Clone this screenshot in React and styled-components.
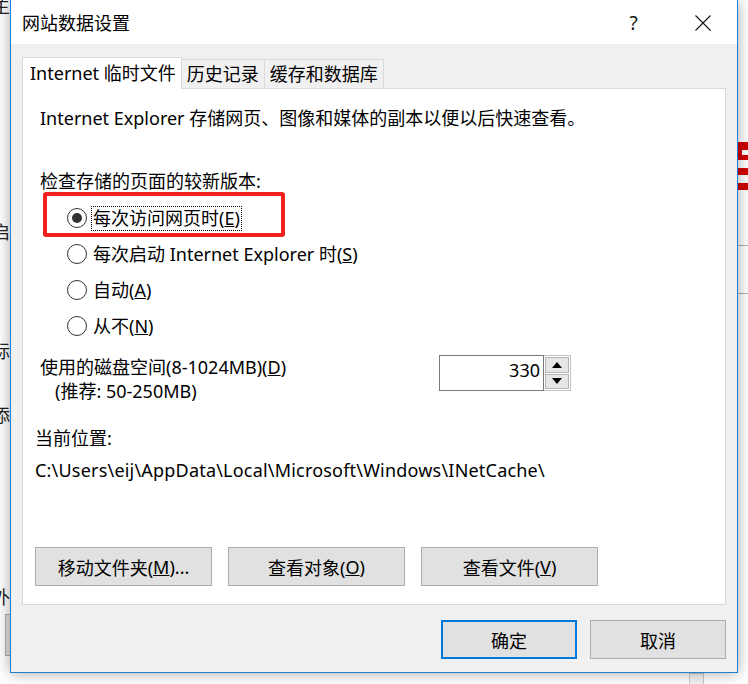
import React from "react";
import styled, { createGlobalStyle } from "styled-components";

const Global = createGlobalStyle`
  html, body { margin: 0; padding: 0; background: #fff; }
  body {
    width: 748px; height: 684px; overflow: hidden;
    font-family: "Noto Sans", "Noto Sans CJK SC", sans-serif;
    font-size: 18px; color: #000;
  }
  * { box-sizing: border-box; }
`;

const Desktop = styled.div`
  position: relative;
  width: 748px;
  height: 684px;
  overflow: hidden;
  background: #fff;
  padding-left: 10px;
`;

const BackText = styled.span`
  position: absolute;
  left: -8px;
  top: ${(p) => p.$top}px;
  font-size: 18px;
  line-height: 20px;
  color: #222;
  z-index: 0;
`;

const BackBox = styled.div`
  position: absolute;
  left: ${(p) => p.$left}px;
  top: ${(p) => p.$top}px;
  width: ${(p) => p.$w}px;
  height: ${(p) => p.$h}px;
  background: ${(p) => p.$bg || "#e1e1e1"};
  border: ${(p) => (p.$border ? `1px solid ${p.$border}` : "none")};
  z-index: 0;
`;

const Dialog = styled.div`
  position: relative;
  z-index: 1;
  width: 728px;
  height: 673px;
  border: 1px solid #1f80d6;
  border-top: none;
  background: #f0f0f0;
  box-shadow: 0 0 14px rgba(0, 0, 0, 0.35);
  display: flex;
  flex-direction: column;
`;

const TitleBar = styled.div`
  height: 44px;
  flex: none;
  background: #fff;
  display: flex;
  align-items: center;
  padding-left: 11px;
`;

const Title = styled.div`
  flex: 1;
  font-size: 18px;
  line-height: 24px;
  padding-top: 2px;
`;

const TitleButton = styled.div`
  width: 69px;
  height: 44px;
  display: flex;
  align-items: center;
  justify-content: center;
  font-size: 19px;
  color: #111;
  padding-top: 2px;
`;

const Body = styled.div`
  flex: 1;
  display: flex;
  flex-direction: column;
  padding: 13px 11px 13px 11px;
`;

const TabRow = styled.div`
  display: flex;
  align-items: flex-end;
  height: 32px;
  margin-bottom: -1px;
  position: relative;
  z-index: 2;
`;

const Tab = styled.div`
  height: ${(p) => (p.$active ? 32 : 29)}px;
  margin-bottom: ${(p) => (p.$active ? 0 : 1)}px;
  background: ${(p) => (p.$active ? "#fff" : "#f0f0f0")};
  border: 1px solid #d9d9d9;
  border-bottom: none;
  border-left: ${(p) => (p.$first ? "1px solid #d9d9d9" : "none")};
  padding: ${(p) => (p.$active ? "0 5px 0 7px" : "0 5px")};
  font-size: 18px;
  line-height: ${(p) => (p.$active ? 30 : 29)}px;
  white-space: nowrap;
`;

const Panel = styled.div`
  flex: 1;
  background: #fff;
  border: 1px solid #d9d9d9;
  display: flex;
  flex-direction: column;
  padding: 17px 17px 18px 12px;
`;

const Line = styled.div`
  font-size: 18px;
  line-height: 24px;
  white-space: nowrap;
  margin-left: ${(p) => p.$indent ?? 5}px;
  margin-top: ${(p) => p.$mt || 0}px;
  letter-spacing: ${(p) => p.$ls || 0}px;
`;

const RadioGroup = styled.div`
  position: relative;
  margin-left: 5px;
  margin-top: 7px;
  display: flex;
  flex-direction: column;
`;

const RadioRow = styled.div`
  height: 36px;
  display: flex;
  align-items: center;
  padding-left: 27px;
`;

const RadioCircle = styled.span`
  width: 20px;
  height: 20px;
  border-radius: 50%;
  border: 1px solid #333;
  display: flex;
  align-items: center;
  justify-content: center;
  flex: none;
  &::after {
    content: "";
    display: ${(p) => (p.$checked ? "block" : "none")};
    width: 10px;
    height: 10px;
    border-radius: 50%;
    background: #333;
  }
`;

const RadioLabel = styled.span`
  margin-left: 4px;
  padding: 0 1px;
  line-height: 23px;
  border: 1px dotted ${(p) => (p.$focus ? "#000" : "transparent")};
  white-space: nowrap;
`;

const Highlight = styled.div`
  position: absolute;
  left: 3px;
  top: -8px;
  width: 242px;
  height: 45px;
  border: 4px solid #f2231c;
  border-radius: 3px;
  pointer-events: none;
`;

const DiskRow = styled.div`
  display: grid;
  grid-template-columns: 399px auto;
  margin-left: 5px;
  margin-top: 11px;
  align-items: start;
`;

const DiskText = styled.div`
  padding-top: 0px;
`;

const SpinBox = styled.div`
  display: flex;
  height: 36px;
`;

const SpinField = styled.div`
  width: 105px;
  height: 36px;
  border: 1px solid #7a7a7a;
  text-align: right;
  padding-right: 3px;
  font-size: 18px;
  line-height: 28px;
`;

const SpinButtons = styled.div`
  width: 27px;
  height: 36px;
  border: 1px solid #c2c2c2;
  border-left: none;
  padding: 1px;
  display: flex;
  flex-direction: column;
  gap: 1px;
`;

const SpinBtn = styled.div`
  flex: 1;
  background: #e6e6e6;
  border: 1px solid #b4b4b4;
  display: flex;
  align-items: center;
  justify-content: center;
`;

const ButtonRow = styled.div`
  margin-top: auto;
  display: flex;
  gap: 16px;
`;

const PushButton = styled.div`
  width: ${(p) => p.$w}px;
  height: 39px;
  background: #e1e1e1;
  border: ${(p) => (p.$default ? "2px solid #0078d7" : "1px solid #adadad")};
  display: flex;
  align-items: center;
  justify-content: center;
  font-size: 18px;
  white-space: nowrap;
`;

const Footer = styled.div`
  margin-top: 15px;
  display: flex;
  justify-content: flex-end;
  gap: 13px;
`;

const Tri = ({ up }) => (
  <svg width="10" height="6" viewBox="0 0 10 6">
    <polygon points={up ? "5,0 10,6 0,6" : "0,0 10,0 5,6"} fill="#000" />
  </svg>
);

export default function App() {
  return (
    <>
      <Global />
      <Desktop>
        <BackText $top={-4}>主</BackText>
        <BackText $top={222}>启</BackText>
        <BackText $top={341}>标</BackText>
        <BackText $top={405}>添</BackText>
        <BackText $top={587}>外</BackText>
        <BackBox $left={5} $top={614} $w={20} $h={42} $bg="#e1e1e1" $border="#adadad" />
        <BackBox $left={738} $top={142} $w={12} $h={18} $bg="#d10000" />
        <BackBox $left={742} $top={150} $w={8} $h={5} $bg="#fff" />
        <BackBox $left={738} $top={168} $w={12} $h={7} $bg="#d10000" />
        <BackBox $left={738} $top={183} $w={12} $h={7} $bg="#d10000" />
        <BackBox $left={738} $top={245} $w={12} $h={1} $bg="#b0b0b0" />
        <BackBox $left={738} $top={293} $w={12} $h={1} $bg="#b0b0b0" />
        <BackBox $left={689} $top={673} $w={15} $h={12} $bg="#f2f2f2" $border="#c8c8c8" />

        <Dialog>
          <TitleBar>
            <Title>网站数据设置</Title>
            <TitleButton>?</TitleButton>
            <TitleButton>
              <svg width="16" height="16" viewBox="0 0 16 16">
                <path d="M0.5 0.5 L15.5 15.5 M15.5 0.5 L0.5 15.5" stroke="#111" strokeWidth="1.1" />
              </svg>
            </TitleButton>
          </TitleBar>
          <Body>
            <TabRow>
              <Tab $active $first>Internet 临时文件</Tab>
              <Tab>历史记录</Tab>
              <Tab>缓存和数据库</Tab>
            </TabRow>
            <Panel>
              <Line>Internet Explorer 存储网页、图像和媒体的副本以便以后快速查看。</Line>
              <Line $mt={39}>检查存储的页面的较新版本:</Line>
              <RadioGroup>
                <RadioRow>
                  <RadioCircle $checked />
                  <RadioLabel $focus>每次访问网页时(<u>E</u>)</RadioLabel>
                </RadioRow>
                <RadioRow>
                  <RadioCircle />
                  <RadioLabel>每次启动 Internet Explorer 时(<u>S</u>)</RadioLabel>
                </RadioRow>
                <RadioRow>
                  <RadioCircle />
                  <RadioLabel>自动(<u>A</u>)</RadioLabel>
                </RadioRow>
                <RadioRow>
                  <RadioCircle />
                  <RadioLabel>从不(<u>N</u>)</RadioLabel>
                </RadioRow>
                <Highlight />
              </RadioGroup>
              <DiskRow>
                <DiskText>
                  <Line $indent={0}>使用的磁盘空间(8-1024MB)(<u>D</u>)</Line>
                  <Line $indent={15}>(推荐: 50-250MB)</Line>
                </DiskText>
                <SpinBox>
                  <SpinField>330</SpinField>
                  <SpinButtons>
                    <SpinBtn><Tri up /></SpinBtn>
                    <SpinBtn><Tri /></SpinBtn>
                  </SpinButtons>
                </SpinBox>
              </DiskRow>
              <Line $indent={0} $mt={23}>当前位置:</Line>
              <Line $indent={0} $mt={8} $ls={0.2}>C:\Users\eij\AppData\Local\Microsoft\Windows\INetCache\</Line>
              <ButtonRow>
                <PushButton $w={177}>移动文件夹(<u>M</u>)...</PushButton>
                <PushButton $w={177}>查看对象(<u>O</u>)</PushButton>
                <PushButton $w={177}>查看文件(<u>V</u>)</PushButton>
              </ButtonRow>
            </Panel>
            <Footer>
              <PushButton $w={136} $default>确定</PushButton>
              <PushButton $w={136}>取消</PushButton>
            </Footer>
          </Body>
        </Dialog>
      </Desktop>
    </>
  );
}
